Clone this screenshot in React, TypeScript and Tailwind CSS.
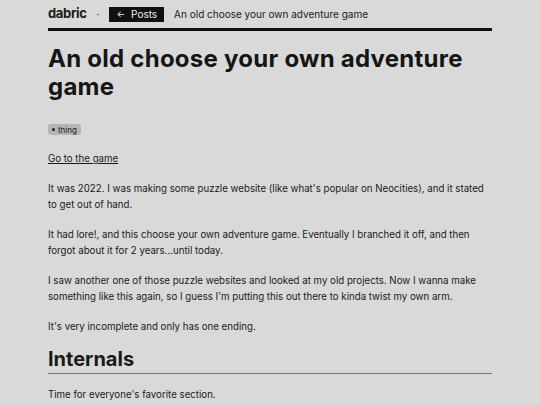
import React from "react";

export default function App() {
  return (
    <div className="min-h-[405px] w-full bg-[#d9d9d9] text-[#1a1a1a]" style={{ fontFamily: "Inter, sans-serif" }}>
      <div className="mx-auto w-[444px] pt-[6px]">
        <header className="flex h-[25px] items-center border-b-[3px] border-[#111] pb-[6px] text-[10px]">
          <span className="text-[13px] font-bold tracking-tight">dabric</span>
          <span className="ml-[10px] mr-[10px] text-[#333]">·</span>
          <span className="flex h-[15px] items-center bg-[#111] px-[7px] text-[10px] text-[#eee]">
            <span className="mr-[6px] text-[9px]">←</span>Posts
          </span>
          <span className="ml-[10px] text-[10px]">An old choose your own adventure game</span>
        </header>
        <h1 className="mt-[14px] text-[24px] font-bold leading-[28px] tracking-[0.25px] text-[#151515]">
          An old choose your own adventure game
        </h1>
        <div className="mt-[23px] flex">
          <span className="flex h-[11px] items-center rounded-[3px] bg-[#b5b5b5] px-[4px] text-[8px] text-[#222]">
            <span className="mr-[3px] inline-block h-[3px] w-[3px] rounded-full bg-[#222]"></span>thing
          </span>
        </div>
        <div className="mt-[16px] text-[9.7px] leading-[16px]">
          <p>
            <a className="underline">Go to the game</a>
          </p>
          <p className="mt-[14px]">
            It was 2022. I was making some puzzle website (like what's popular on Neocities), and it stated to get out of hand.
          </p>
          <p className="mt-[14px]">
            It had lore!, and this choose your own adventure game. Eventually I branched it off, and then forgot about it for 2 years...until today.
          </p>
          <p className="mt-[14px]">
            I saw another one of those puzzle websites and looked at my old projects. Now I wanna make something like this again, so I guess I'm putting this out there to kinda twist my own arm.
          </p>
          <p className="mt-[14px]">It's very incomplete and only has one ending.</p>
        </div>
        <h2 className="mt-[12px] border-b border-[#777] pb-[2px] text-[20px] font-bold leading-[24px]">Internals</h2>
        <p className="mt-[13px] text-[9.7px] leading-[16px]">Time for everyone's favorite section.</p>
      </div>
    </div>
  );
}
